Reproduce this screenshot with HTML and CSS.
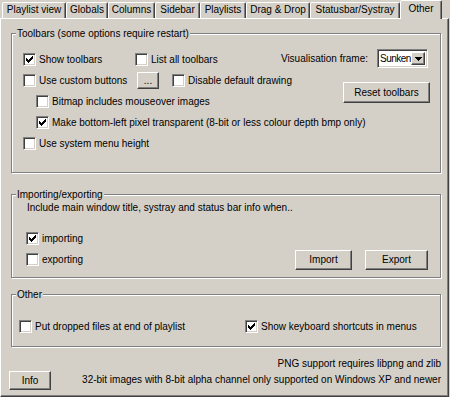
FILE: index.html
```html
<!DOCTYPE html>
<html lang="en">
<head>
  <meta charset="UTF-8" />
  <title>Preferences — Other</title>
  <link rel="stylesheet" href="styles.css">
</head>
<body>
  <main class="window">
    <nav class="tabs">
      <span class="tab tab-1">Playlist view</span>
      <span class="tab tab-2">Globals</span>
      <span class="tab tab-3">Columns</span>
      <span class="tab tab-4">Sidebar</span>
      <span class="tab tab-5">Playlists</span>
      <span class="tab tab-6">Drag &amp; Drop</span>
      <span class="tab tab-7">Statusbar/Systray</span>
      <span class="tab tab-active">Other</span>
    </nav>

    <section class="panel">
      <fieldset class="group group-toolbars">
        <legend>Toolbars (some options require restart)</legend>
        <div class="group-body">
          <div class="toolbar-top">
            <div class="toolbar-left">
              <div class="row">
                <label class="check col-a"><span class="cb"><svg viewBox="0 0 7 7" width="7" height="7"><path d="M0 2h1v3H0zM1 3h1v3H1zM2 4h1v3H2zM3 3h1v3H3zM4 2h1v3H4zM5 1h1v3H5zM6 0h1v3H6z"/></svg></span>Show toolbars</label>
                <label class="check"><span class="cb"></span>List all toolbars</label>
              </div>
              <div class="row">
                <label class="check col-a"><span class="cb"></span>Use custom buttons</label>
                <button class="btn btn-dots">...</button>
                <label class="check check-disable"><span class="cb"></span>Disable default drawing</label>
              </div>
              <div class="row indent">
                <label class="check"><span class="cb"></span>Bitmap includes mouseover images</label>
              </div>
            </div>
            <div class="toolbar-right">
              <div class="vis-row">
                <span>Visualisation frame:</span>
                <span class="combo">
                  <span class="combo-text">Sunken</span>
                  <span class="combo-btn"><svg viewBox="0 0 7 4" width="7" height="4"><path d="M0 0h7v1H0zM1 1h5v1H1zM2 2h3v1H2zM3 3h1v1H3z"/></svg></span>
                </span>
              </div>
              <button class="btn btn-reset">Reset toolbars</button>
            </div>
          </div>
          <div class="row indent">
            <label class="check"><span class="cb"><svg viewBox="0 0 7 7" width="7" height="7"><path d="M0 2h1v3H0zM1 3h1v3H1zM2 4h1v3H2zM3 3h1v3H3zM4 2h1v3H4zM5 1h1v3H5zM6 0h1v3H6z"/></svg></span>Make bottom-left pixel transparent (8-bit or less colour depth bmp only)</label>
          </div>
          <div class="row">
            <label class="check"><span class="cb"></span>Use system menu height</label>
          </div>
        </div>
      </fieldset>

      <fieldset class="group group-import">
        <legend>Importing/exporting</legend>
        <div class="group-body">
          <p class="hint">Include main window title, systray and status bar info when..</p>
          <div class="row row-first">
            <label class="check"><span class="cb"><svg viewBox="0 0 7 7" width="7" height="7"><path d="M0 2h1v3H0zM1 3h1v3H1zM2 4h1v3H2zM3 3h1v3H3zM4 2h1v3H4zM5 1h1v3H5zM6 0h1v3H6z"/></svg></span>importing</label>
          </div>
          <div class="row">
            <label class="check"><span class="cb"></span>exporting</label>
            <div class="actions">
              <button class="btn btn-import">Import</button>
              <button class="btn btn-export">Export</button>
            </div>
          </div>
        </div>
      </fieldset>

      <fieldset class="group group-other">
        <legend>Other</legend>
        <div class="group-body">
          <div class="row">
            <label class="check col-b"><span class="cb"></span>Put dropped files at end of playlist</label>
            <label class="check"><span class="cb"><svg viewBox="0 0 7 7" width="7" height="7"><path d="M0 2h1v3H0zM1 3h1v3H1zM2 4h1v3H2zM3 3h1v3H3zM4 2h1v3H4zM5 1h1v3H5zM6 0h1v3H6z"/></svg></span>Show keyboard shortcuts in menus</label>
          </div>
        </div>
      </fieldset>

      <footer class="footer">
        <button class="btn btn-info">Info</button>
        <div class="notes">
          <p>PNG support requires libpng and zlib</p>
          <p>32-bit images with 8-bit alpha channel only supported on Windows XP and newer</p>
        </div>
      </footer>
    </section>
  </main>
</body>
</html>
```

FILE: styles.css
```css
:root {
  --face: #d4d0c8;
  --light: #ffffff;
  --shadow: #808080;
  --dark: #404040;
}

* { box-sizing: border-box; }

body {
  margin: 0;
  background: var(--face);
  color: #000;
  font-family: "Liberation Sans", Arial, sans-serif;
  font-size: 10px;
  line-height: 13px;
}

p { margin: 0; }

.window {
  width: 450px;
  height: 397px;
}

/* tab strip */
.tabs {
  display: flex;
  align-items: flex-end;
  height: 18px;
  padding-left: 2px;
  position: relative;
  z-index: 1;
}

.tab {
  height: 16px;
  border: 1px solid;
  border-bottom: 0;
  border-color: var(--light) var(--dark) transparent var(--light);
  border-radius: 2px 2px 0 0;
  box-shadow: inset -1px 0 0 var(--shadow);
  background: var(--face);
  text-align: center;
  line-height: 14px;
  white-space: nowrap;
}

.tab-1 { width: 64px; }
.tab-2 { width: 42px; }
.tab-3 { width: 47px; }
.tab-4 { width: 45px; }
.tab-5 { width: 46px; }
.tab-6 { width: 64px; }
.tab-7 { width: 90px; }

.tab-active {
  width: 42px;
  height: 19px;
  margin-bottom: -1px;
  line-height: 16px;
}

/* page body */
.panel {
  width: 449px;
  height: 379px;
  border: 1px solid;
  border-color: var(--light) var(--dark) var(--dark) var(--light);
  box-shadow: inset -1px -1px 0 var(--shadow);
  padding: 8px 5px 0 10px;
}

.group {
  width: 430px;
  min-width: 0;
  margin: 0;
  padding: 0;
  border: 1px solid var(--shadow);
  box-shadow: inset 1px 1px 0 var(--light), 1px 1px 0 var(--light);
}

.group legend {
  margin-left: 4px;
  padding: 0 1px;
  line-height: 13px;
  background: var(--face);
}

.group-toolbars .group-body { padding: 9px 12px 18px 11px; }
.group-import { margin-top: 15px; }
.group-import .group-body { padding: 0 12px 7px 14px; }
.group-other { margin-top: 10px; }
.group-other .group-body { padding: 15px 12px 9px 7px; }

.row {
  display: flex;
  align-items: center;
  height: 21px;
}

.row > * { flex-shrink: 0; }

.indent { padding-left: 13px; }

.check {
  display: flex;
  align-items: center;
  white-space: nowrap;
}

.col-a { width: 112px; }
.col-b { width: 226px; }
.check-disable { margin-left: 13px; }

.cb {
  width: 13px;
  height: 13px;
  margin-right: 3px;
  flex-shrink: 0;
  display: inline-flex;
  align-items: center;
  justify-content: center;
  border: 1px solid;
  border-color: var(--shadow) var(--light) var(--light) var(--shadow);
  box-shadow: inset 1px 1px 0 var(--dark), inset -1px -1px 0 var(--face);
  background: #fff;
}

.cb svg { display: block; }

.btn {
  font: inherit;
  color: #000;
  background: var(--face);
  border: 1px solid;
  border-color: var(--light) var(--dark) var(--dark) var(--light);
  box-shadow: inset -1px -1px 0 var(--shadow);
  padding: 0;
  height: 20px;
  line-height: 16px;
}

.btn-dots {
  width: 22px;
  height: 17px;
  margin-left: 2px;
  line-height: 12px;
}

/* toolbar block: checkboxes left, frame + reset right */
.toolbar-top {
  display: flex;
  justify-content: space-between;
}

.toolbar-left {
  flex: 1;
  min-width: 0;
}

.toolbar-right {
  display: flex;
  flex-direction: column;
  align-items: flex-end;
  flex-shrink: 0;
}

.vis-row {
  display: flex;
  align-items: center;
  gap: 9px;
  height: 19px;
  white-space: nowrap;
}

.combo {
  display: flex;
  width: 51px;
  height: 19px;
  border: 1px solid;
  border-color: var(--shadow) var(--light) var(--light) var(--shadow);
  box-shadow: inset 1px 1px 0 var(--dark), inset -1px -1px 0 var(--face);
  background: #fff;
  padding: 2px 2px 2px 1px;
  overflow: hidden;
}

.combo-text {
  flex: 1;
  min-width: 0;
  line-height: 13px;
  padding-left: 1px;
  letter-spacing: -0.5px;
  white-space: nowrap;
}

.combo-btn {
  width: 14px;
  height: 13px;
  flex-shrink: 0;
  display: flex;
  align-items: center;
  justify-content: center;
  background: var(--face);
  border: 1px solid;
  border-color: var(--light) var(--dark) var(--dark) var(--light);
  box-shadow: inset -1px -1px 0 var(--shadow);
}

.combo-btn svg { display: block; }

.btn-reset {
  width: 87px;
  height: 21px;
  margin-top: 14px;
  margin-right: -2px;
}

/* importing / exporting */
.hint { margin-left: 1px; }

.row-first { margin-top: 14px; }

.actions {
  display: flex;
  gap: 13px;
  margin-left: auto;
}

.btn-import { width: 57px; }
.btn-export { width: 63px; }

/* footer */
.footer {
  display: flex;
  justify-content: space-between;
  margin-top: 9px;
  padding-right: 2px;
}

.btn-info {
  width: 42px;
  height: 19px;
  margin: 15px 0 0 -2px;
}

.notes {
  text-align: right;
  line-height: 16px;
}
```
